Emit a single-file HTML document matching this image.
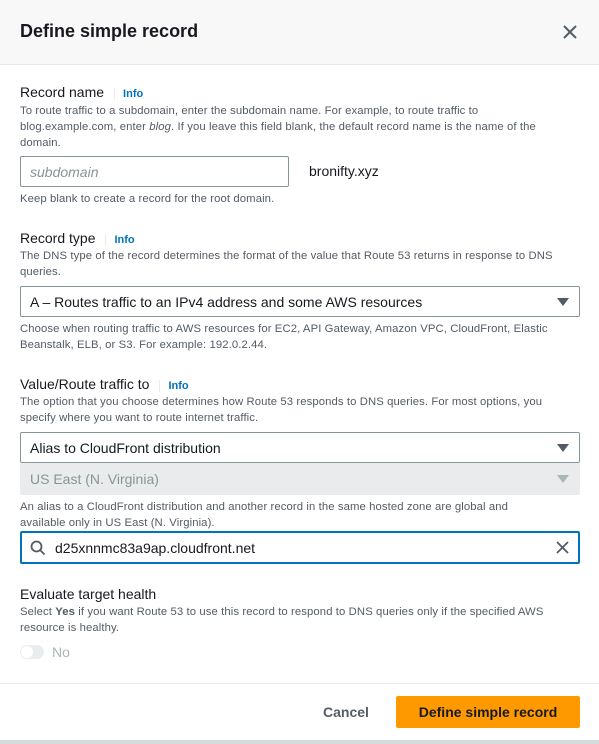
<!DOCTYPE html>
<html><head><style>
*{box-sizing:border-box;margin:0;padding:0}
body{width:599px;height:744px;background:#fff;font-family:"Liberation Sans",sans-serif;color:#16191f;position:relative;overflow:hidden}
.a{position:absolute}
.hdr{left:0;top:0;width:599px;height:65px;background:#f8f8f8;border-bottom:1px solid #e5e7e9}
.lbl{font-size:14px;color:#16191f;line-height:16px}
.info{font-size:11px;font-weight:bold;color:#0073bb;margin-left:10px;padding-left:8px;border-left:1px solid #e9ebed}
.d{font-size:11.3px;letter-spacing:0.1px;color:#545b64;line-height:16px;left:20px;width:556px}
.inp{border:1px solid #879596;border-radius:2px;background:#fff;font-size:14px;display:flex;align-items:center;padding-left:9px}
.tri{position:absolute;right:10px;top:11px;width:0;height:0;border-left:6px solid transparent;border-right:6px solid transparent;border-top:8px solid #545b64}
</style></head><body>
<div class="a hdr"></div>
<div class="a" style="left:20px;top:21px;font-size:18px;font-weight:bold">Define simple record</div>
<svg class="a" style="left:563px;top:25px" width="14" height="14"><path d="M1 1L13 13M13 1L1 13" stroke="#545b64" stroke-width="2"/></svg>

<div class="a lbl" style="left:20px;top:84px">Record name<span class="info">Info</span></div>
<div class="a d" style="top:103px">To route traffic to a subdomain, enter the subdomain name. For example, to route traffic to blog.example.com, enter <i>blog</i>. If you leave this field blank, the default record name is the name of the domain.</div>
<div class="a inp" style="left:20px;top:156px;width:269px;height:31px;color:#879596;font-style:italic">subdomain</div>
<div class="a" style="left:309px;top:163px;font-size:14px">bronifty.xyz</div>
<div class="a d" style="top:191px">Keep blank to create a record for the root domain.</div>

<div class="a lbl" style="left:20px;top:230px">Record type<span class="info">Info</span></div>
<div class="a d" style="top:248px">The DNS type of the record determines the format of the value that Route 53 returns in response to DNS queries.</div>
<div class="a inp" style="left:20px;top:286px;width:560px;height:31px">A – Routes traffic to an IPv4 address and some AWS resources<div class="tri"></div></div>
<div class="a d" style="top:321px">Choose when routing traffic to AWS resources for EC2, API Gateway, Amazon VPC, CloudFront, Elastic Beanstalk, ELB, or S3. For example: 192.0.2.44.</div>

<div class="a lbl" style="left:20px;top:376px">Value/Route traffic to<span class="info">Info</span></div>
<div class="a d" style="top:394px">The option that you choose determines how Route 53 responds to DNS queries. For most options, you specify where you want to route internet traffic.</div>
<div class="a inp" style="left:20px;top:432px;width:560px;height:31px">Alias to CloudFront distribution<div class="tri"></div></div>
<div class="a inp" style="left:20px;top:463px;width:560px;height:32px;background:#e9ebed;border-color:#e9ebed;color:#879596">US East (N. Virginia)<div class="tri" style="border-top-color:#aab7b8"></div></div>
<div class="a d" style="top:499px">An alias to a CloudFront distribution and another record in the same hosted zone are global and<br>available only in US East (N. Virginia).</div>
<div class="a inp" style="left:20px;top:531px;width:560px;height:33px;border:2px solid #0073bb;padding-left:8px">
<svg width="16" height="16" style="margin-right:9px"><circle cx="6.5" cy="6.5" r="5" fill="none" stroke="#545b64" stroke-width="1.8"/><path d="M10 10L14.5 14.5" stroke="#545b64" stroke-width="1.8"/></svg>d25xnnmc83a9ap.cloudfront.net
<svg class="a" style="right:9px;top:8px" width="13" height="13"><path d="M1 1L12 12M12 1L1 12" stroke="#545b64" stroke-width="1.8"/></svg></div>

<div class="a lbl" style="left:20px;top:586px">Evaluate target health</div>
<div class="a d" style="top:604px">Select <b>Yes</b> if you want Route 53 to use this record to respond to DNS queries only if the specified AWS resource is healthy.</div>
<div class="a" style="left:20px;top:645px;width:24px;height:14px;border-radius:7px;background:#eaeded"></div>
<div class="a" style="left:21px;top:646px;width:12px;height:12px;border-radius:6px;background:#fff"></div>
<div class="a" style="left:52px;top:644px;font-size:14px;color:#aab7b8">No</div>

<div class="a" style="left:0;top:683px;width:599px;height:1px;background:#e9ebed"></div>
<div class="a" style="left:323px;top:704px;font-size:14px;font-weight:bold;color:#545b64">Cancel</div>
<div class="a" style="left:396px;top:696px;width:184px;height:32px;background:#ff9900;border-radius:2px;font-size:14px;font-weight:bold;color:#16191f;display:flex;align-items:center;justify-content:center">Define simple record</div>
<div class="a" style="left:0;top:740px;width:599px;height:4px;background:#d5dbdb"></div>
</body></html>
